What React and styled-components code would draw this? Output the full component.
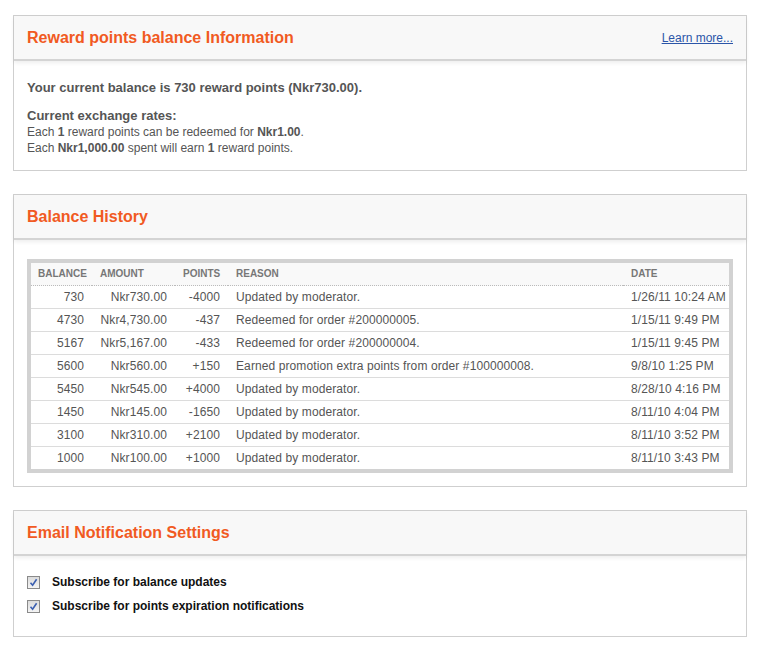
import React from "react";
import styled, { createGlobalStyle } from "styled-components";

const GlobalStyle = createGlobalStyle`
  body {
    margin: 0;
    background: #fff;
    font-family: Arial, "Liberation Sans", sans-serif;
    font-size: 12px;
    color: #555;
  }
`;

const Page = styled.div`
  padding: 15px 14px 12px 13px;
  display: flex;
  flex-direction: column;
  gap: 23px;
`;

const Box = styled.div`
  border: 1px solid #cfcfcf;
  background: #fff;
`;

const BoxHead = styled.div`
  height: 43px;
  display: flex;
  align-items: center;
  justify-content: space-between;
  padding: 0 13px;
  background: #f8f8f8;
  border-bottom: 2px solid #d4d4d4;
  box-shadow: 0 2px 4px rgba(0, 0, 0, 0.07);
  h2 {
    margin: 0;
    font-size: 16px;
    font-weight: bold;
    color: #f15a22;
  }
  a {
    color: #2b55a8;
    text-decoration: underline;
    font-size: 12px;
  }
`;

const BoxContent = styled.div`
  padding: ${(p) => p.$pad || "19px 13px 14px"};
  line-height: 16px;
  p {
    margin: 0;
  }
  strong {
    color: #555;
  }
`;

const Balance = styled.p`
  font-size: 13px;
  font-weight: bold;
  margin-bottom: 12px !important;
`;

const RatesTitle = styled.p`
  font-size: 13px;
  font-weight: bold;
`;

const Table = styled.table`
  width: 100%;
  table-layout: fixed;
  border-collapse: collapse;
  border: 4px solid #d2d2d2;
  font-size: 12px;
  color: #555;
  th {
    height: 22px;
    font-size: 10px;
    font-weight: bold;
    color: #777;
    text-align: left;
    padding: 0 8px;
    background: #f9f9f9;
    border-bottom: 1px dotted #bbb;
  }
  td {
    height: 22px;
    padding: 0 8px;
    border-top: 1px solid #dcdcdc;
    white-space: nowrap;
    letter-spacing: 0.1px;
  }
  tbody tr:first-child td {
    border-top: none;
  }
  th:first-child,
  td:first-child {
    padding-left: 7px;
  }
`;

const Num = styled.td`
  text-align: right;
`;

const CheckRow = styled.label`
  display: flex;
  align-items: center;
  gap: 12px;
  height: 24px;
  font-weight: bold;
  color: #111;
`;

const CheckBox = styled.span`
  width: 11px;
  height: 11px;
  border: 1px solid #8a8a8a;
  background: linear-gradient(#dcdcdc, #f4f4f4);
  display: flex;
  align-items: center;
  justify-content: center;
`;

const rows = [
  ["730", "Nkr730.00", "-4000", "Updated by moderator.", "1/26/11 10:24 AM"],
  ["4730", "Nkr4,730.00", "-437", "Redeemed for order #200000005.", "1/15/11 9:49 PM"],
  ["5167", "Nkr5,167.00", "-433", "Redeemed for order #200000004.", "1/15/11 9:45 PM"],
  ["5600", "Nkr560.00", "+150", "Earned promotion extra points from order #100000008.", "9/8/10 1:25 PM"],
  ["5450", "Nkr545.00", "+4000", "Updated by moderator.", "8/28/10 4:16 PM"],
  ["1450", "Nkr145.00", "-1650", "Updated by moderator.", "8/11/10 4:04 PM"],
  ["3100", "Nkr310.00", "+2100", "Updated by moderator.", "8/11/10 3:52 PM"],
  ["1000", "Nkr100.00", "+1000", "Updated by moderator.", "8/11/10 3:43 PM"],
];

function Check() {
  return (
    <CheckBox>
      <svg width="9" height="9" viewBox="0 0 9 9">
        <path d="M1.5 4.8 L3.6 7.2 L7.6 1.2" fill="none" stroke="#3b5fb0" strokeWidth="1.6" />
      </svg>
    </CheckBox>
  );
}

export default function App() {
  return (
    <>
      <GlobalStyle />
      <Page>
        <Box>
          <BoxHead>
            <h2>Reward points balance Information</h2>
            <a href="#">Learn more...</a>
          </BoxHead>
          <BoxContent>
            <Balance>Your current balance is 730 reward points (Nkr730.00).</Balance>
            <RatesTitle>Current exchange rates:</RatesTitle>
            <p>
              Each <strong>1</strong> reward points can be redeemed for <strong>Nkr1.00</strong>.
            </p>
            <p>
              Each <strong>Nkr1,000.00</strong> spent will earn <strong>1</strong> reward points.
            </p>
          </BoxContent>
        </Box>

        <Box>
          <BoxHead>
            <h2>Balance History</h2>
          </BoxHead>
          <BoxContent $pad="19px 13px 13px">
            <Table>
              <colgroup>
                <col style={{ width: 63 }} />
                <col style={{ width: 83 }} />
                <col style={{ width: 53 }} />
                <col />
                <col style={{ width: 108 }} />
              </colgroup>
              <thead>
                <tr>
                  <th>BALANCE</th>
                  <th>AMOUNT</th>
                  <th>POINTS</th>
                  <th>REASON</th>
                  <th>DATE</th>
                </tr>
              </thead>
              <tbody>
                {rows.map((r, i) => (
                  <tr key={i}>
                    <Num>{r[0]}</Num>
                    <Num>{r[1]}</Num>
                    <Num>{r[2]}</Num>
                    <td>{r[3]}</td>
                    <td>{r[4]}</td>
                  </tr>
                ))}
              </tbody>
            </Table>
          </BoxContent>
        </Box>

        <Box>
          <BoxHead>
            <h2>Email Notification Settings</h2>
          </BoxHead>
          <BoxContent $pad="14px 13px 18px">
            <CheckRow>
              <Check />
              Subscribe for balance updates
            </CheckRow>
            <CheckRow>
              <Check />
              Subscribe for points expiration notifications
            </CheckRow>
          </BoxContent>
        </Box>
      </Page>
    </>
  );
}
